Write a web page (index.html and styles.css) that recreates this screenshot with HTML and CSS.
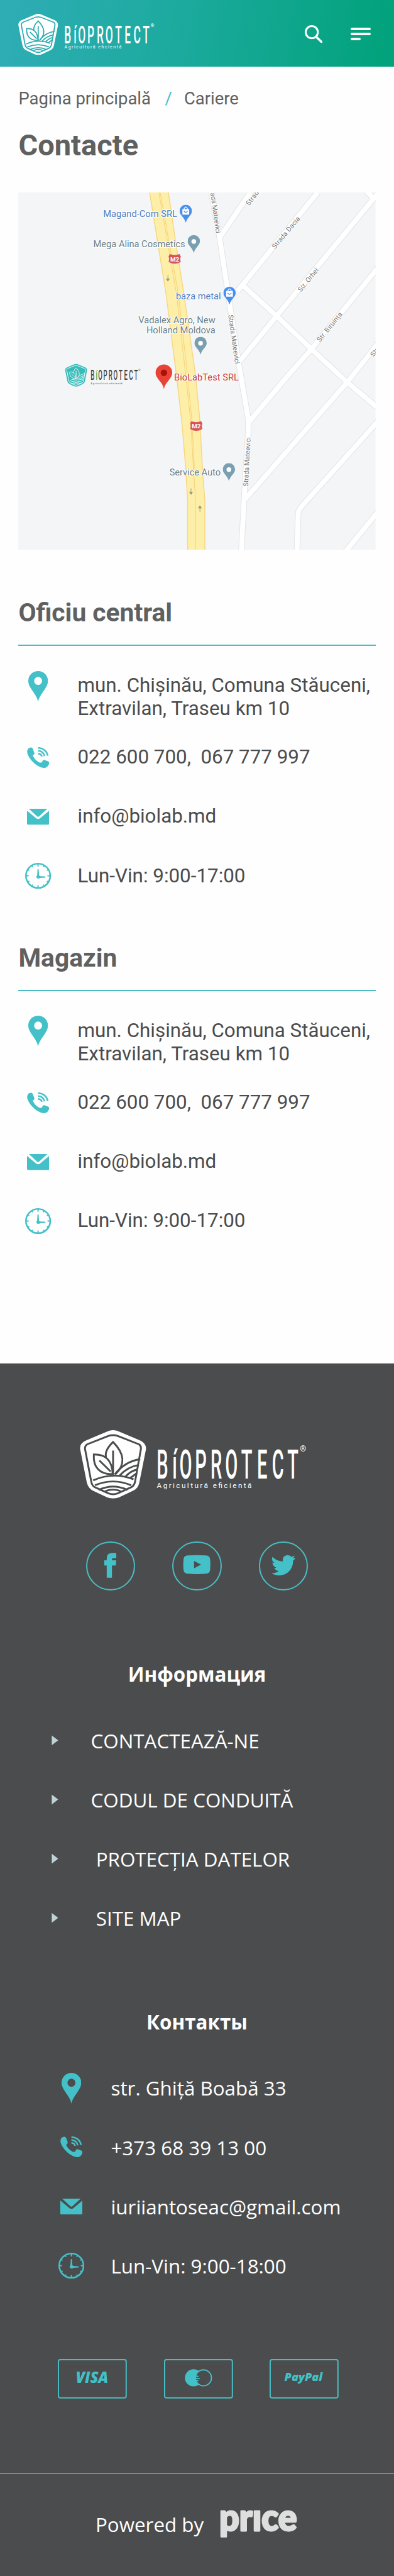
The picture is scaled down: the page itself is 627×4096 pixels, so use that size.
FILE: index.html
```html
<!DOCTYPE html>
<html lang="ro">
<head>
<meta charset="utf-8">
<title>Contacte – Bioprotect</title>
<link rel="stylesheet" href="styles.css">
</head>
<body>
<svg class="sprite" aria-hidden="true">
  <defs>
    <mask id="shield-cut" maskUnits="userSpaceOnUse" x="20" y="20" width="345" height="350">
      <path fill="#fff" d="M165 34Q192 22 219 34L328 80Q354 94 353 120L320 285Q314 312 292 323L222 356Q192 368 162 356L92 323Q72 312 64 285L31 120Q28 94 56 80Z"/>
      <g fill="none" stroke="#000" stroke-width="9">
        <path d="M170 56Q192 49 214 56L318 97Q330 104 328 120L299 282Q294 300 280 307L214 337Q192 345 170 337L104 307Q90 300 86 282L55 120Q54 104 66 97Z"/>
        <path d="M158 160C152 140 165 112 192 86C250 145 252 195 205 242M192 128V245"/>
        <path d="M98 147C152 145 188 172 190 243C125 245 94 208 98 147ZM125 176L180 230"/>
        <path d="M95 273Q192 230 292 268M104 297Q192 260 280 297M122 320Q192 287 262 320M155 325Q192 312 228 325"/>
        <path d="M200 245Q250 180 325 170M224 250Q262 207 318 198M252 256Q278 226 312 220M275 262L306 240"/>
      </g>
    </mask>
    <symbol id="shield" viewBox="30 28 324 334"><rect x="20" y="20" width="345" height="350" fill="currentColor" mask="url(#shield-cut)"/></symbol>
    <symbol id="pin" viewBox="0 0 32 50"><path fill="currentColor" fill-rule="evenodd" d="M16 0A16 16 0 0 1 32 16C32 28 18 37 16 50C14 37 0 28 0 16A16 16 0 0 1 16 0ZM16 9.500A6.500 6.500 0 1 0 16 22.500A6.500 6.500 0 1 0 16 9.500Z"/></symbol>
    <symbol id="phone" viewBox="0 0 108 103"><path fill="currentColor" d="M10 4Q24-2 28 8L36 29Q36 34 32 37L28 42Q38 64 60 76L72 76L77 66Q80 61 86 63L104 70Q110 73 107 84Q98 104 80 102Q50 98 20 64Q-4 34 1 16Q3 8 10 4Z"/><path fill="none" stroke="currentColor" stroke-width="8" d="M54 4A47 43 0 0 1 101 42M54 18A32 29 0 0 1 85 44M54 32A18 16 0 0 1 72 46"/></symbol>
    <symbol id="mail" viewBox="0 0 36 26"><path fill="currentColor" d="M3 0H33L20 12Q18 14 16 12ZM0 3L15 15.500Q18 17.500 21 15.500L36 3V24Q36 26 34 26H2Q0 26 0 24Z"/></symbol>
    <symbol id="clock" viewBox="0 0 42 42"><circle cx="21" cy="21" r="19.700" fill="none" stroke="currentColor" stroke-width="2.600"/><path fill="none" stroke="currentColor" stroke-width="2" stroke-linecap="round" d="M21 2V5M21 37V40M2 21H5M37 21H40M11 4.500L12 6M31 4.500L30 6M11 37.500L12 36M31 37.500L30 36M4.500 11L6 12M37.500 11L36 12M4.500 31L6 30M37.500 31L36 30"/><path fill="currentColor" d="M20 11Q21 9 22 11L22.600 20.500Q24 21 24.500 21.600L32.500 22Q34 23 32.500 24L24 24.400Q21 27 18.500 24Q17.500 21.500 19.500 20.500Z"/></symbol>
    <symbol id="place" viewBox="0 0 20 29"><path fill="currentColor" d="M10 0A10 10 0 0 1 20 10C20 17 13 19 10 29C7 19 0 17 0 10A10 10 0 0 1 10 0Z"/></symbol>
  </defs>
</svg>

<header class="header">
  <svg class="header-logo" viewBox="0 0 368 111">
    <use href="#shield" width="108" height="111"/>
    <text class="wordmark" transform="scale(.45 1)" y="79" x="297.8 342.2 382.2 436.7 492.2 546.7 602.2 657.8 714.4 768.9">BíOPROTECT</text>
    <text class="slogan" x="125" y="94" textLength="154">Agricultură eficientă</text>
    <text class="reg" x="362.500" y="35">®</text>
  </svg>
  <div class="header-tools">
    <svg class="icon-search" viewBox="0 0 28 28"><circle cx="11" cy="11" r="9.500" fill="none" stroke="#fff" stroke-width="3"/><path d="M18 18.500L26.500 26.500" stroke="#fff" stroke-width="3.600" stroke-linecap="round"/></svg>
    <span class="burger"><i></i><i></i><i></i></span>
  </div>
</header>

<main class="main">
  <nav class="crumbs"><span>Pagina principală</span><span class="slash">/</span><span>Cariere</span></nav>
  <h1>Contacte</h1>

  <svg class="map" viewBox="0 0 580 580">
    <defs>
      <g id="roads">
        <path d="M327 73L377 0"/>
        <path d="M356 160L364 150L486 0"/>
        <path d="M364 150L419 200L476 254L534 308L582 348"/>
        <path d="M360 273L419 201L577 10L564-4M577 10L584 2"/>
        <path d="M374 373L437 298L476 254L584 122"/>
        <path d="M368 498L534 308L584 245"/>
        <path d="M452.500 584L454.500 521Q454 516 462 507L584 371"/>
        <path d="M530 584L584 518"/>
        <path d="M313-4L327 74L339 153L358 278L373 365Q374 375 373 395L368 475L362 584"/>
      </g>
    </defs>
    <rect width="580" height="580" fill="#f4f5f7"/>
    <use href="#roads" class="road-edge"/>
    <use href="#roads" class="road-fill"/>
    <path fill="#fdefa8" stroke="#f8d684" stroke-width="1.500" d="M213-2L240 165L257 298L265.500 371L272 448L275 501V582H303V501L299 448L295 371L288 298L269 165L257 90L243.500-2Z"/>
    <path fill="none" stroke="#f6d07b" d="M228-2L257 165L272 298L280 371L284.500 448L288 501V582M230-2L260 165L275 298L282 371L286 448"/>
    <g class="street">
      <text transform="translate(312 1) rotate(82)" textLength="66">ada Mateevici</text>
      <text transform="translate(341 199) rotate(82)" textLength="80">Strada Mateevici</text>
      <text transform="translate(373 477) rotate(-87)" textLength="80">Strada Mateevici</text>
      <text transform="translate(375 22) rotate(-53)" textLength="33">Strada</text>
      <text transform="translate(417 92) rotate(-50)" textLength="64">Strada Dacia</text>
      <text transform="translate(459 162) rotate(-51)" textLength="46">Str. Orhei</text>
      <text transform="translate(490 243) rotate(-51)" textLength="58">Str. Biruința</text>
      <text transform="translate(577 267) rotate(-52)">Str.</text>
    </g>
    <g class="arrow"><path d="M243 134V141M240.500 140H245.500L243 144Z"/><path d="M280.500 480V488M278 486H283L280.500 490Z"/><path d="M295 518V510M292.500 512H297.500L295 508Z"/></g>
    <g class="badge">
      <path d="M246 100Q254 103 262 100L264 104Q262 108 264 112Q261 115.500 254 115.500Q247 115.500 244 112Q246 108 244 104Z"/>
      <path d="M281 371Q289 374 297 371L299 375Q297 379 299 383Q296 386.500 289 386.500Q282 386.500 279 383Q281 379 279 375Z"/>
      <text x="254" y="112">M2</text><text x="289" y="383">M2</text>
    </g>
    <g class="shop">
      <use href="#place" x="262" y="20" width="20" height="29"/>
      <use href="#place" x="333" y="153" width="20" height="29"/>
      <path fill="#fff" d="M266.500 27H277.500V36H266.500ZM337.500 160H348.500V169H337.500Z"/>
      <path fill="none" stroke="#fff" stroke-width="1.300" d="M269 27Q272 20 275 27M340 160Q343 153 346 160"/>
      <path fill="none" stroke="#4a8ff0" stroke-width="1.300" d="M269 30Q272 35 275 30M340 163Q343 168 346 163"/>
      <text x="138" y="40" textLength="120">Magand-Com SRL</text>
      <text x="256" y="173" textLength="73">baza metal</text>
    </g>
    <g class="poi">
      <use href="#place" x="275" y="69" width="20" height="29"/>
      <use href="#place" x="286" y="234" width="20" height="29"/>
      <use href="#place" x="332" y="439" width="20" height="29"/>
      <g fill="#fff"><circle cx="285" cy="79.500" r="3.800"/><circle cx="296" cy="244.500" r="3.800"/><circle cx="342" cy="449.500" r="3.800"/></g>
      <text x="122" y="89" textLength="149">Mega Alina Cosmetics</text>
      <text x="195" y="212" textLength="125">Vadalex Agro, New</text>
      <text x="208" y="229" textLength="112">Holland Moldova</text>
      <text x="245.500" y="459" textLength="83">Service Auto</text>
    </g>
    <g class="target">
      <path d="M236.500 279A13.500 13.500 0 0 1 250 292.500C250 302 238 308 236.500 319C235 308 223 302 223 292.500A13.500 13.500 0 0 1 236.500 279Z" fill="#ea4335"/>
      <circle cx="236.500" cy="292.500" r="5.300" fill="#a5140c"/>
      <text x="253" y="305" textLength="105">BioLabTest SRL</text>
    </g>
    <g transform="translate(76 278) scale(.3333)">
      <g class="map-shield"><use href="#shield" width="108" height="111"/></g>
      <text class="wordmark wordmark-dark" transform="scale(.45 1)" y="79" x="297.8 342.2 382.2 436.7 492.2 546.7 602.2 657.8 714.4 768.9">B<tspan fill="#1fa84c">í</tspan>OPROTECT</text>
      <text class="slogan slogan-dark" x="125" y="98" textLength="154">Agricultură eficientă</text>
      <text class="reg reg-dark" x="362.500" y="35">®</text>
    </g>
  </svg>

  <section class="office">
    <h2>Oficiu central</h2>
    <ul class="contacts">
      <li class="address"><span class="ico"><svg class="i-pin"><use href="#pin"/></svg></span><span>mun. Chișinău, Comuna Stăuceni,<br>Extravilan, Traseu km 10</span></li>
      <li><span class="ico"><svg class="i-phone"><use href="#phone"/></svg></span><span>022 600 700,&nbsp; 067 777 997</span></li>
      <li><span class="ico"><svg class="i-mail"><use href="#mail"/></svg></span><span>info@biolab.md</span></li>
      <li><span class="ico"><svg class="i-clock"><use href="#clock"/></svg></span><span>Lun-Vin: 9:00-17:00</span></li>
    </ul>
  </section>
  <section class="office">
    <h2>Magazin</h2>
    <ul class="contacts">
      <li class="address"><span class="ico"><svg class="i-pin"><use href="#pin"/></svg></span><span>mun. Chișinău, Comuna Stăuceni,<br>Extravilan, Traseu km 10</span></li>
      <li><span class="ico"><svg class="i-phone"><use href="#phone"/></svg></span><span>022 600 700,&nbsp; 067 777 997</span></li>
      <li><span class="ico"><svg class="i-mail"><use href="#mail"/></svg></span><span>info@biolab.md</span></li>
      <li><span class="ico"><svg class="i-clock"><use href="#clock"/></svg></span><span>Lun-Vin: 9:00-17:00</span></li>
    </ul>
  </section>
</main>

<footer class="footer">
  <svg class="footer-logo" viewBox="0 0 368 111">
    <use href="#shield" width="108" height="111"/>
    <text class="wordmark" transform="scale(.45 1)" y="79" x="297.8 342.2 382.2 436.7 492.2 546.7 602.2 657.8 714.4 768.9">BíOPROTECT</text>
    <text class="slogan" x="125" y="94" textLength="154">Agricultură eficientă</text>
    <text class="reg" x="362.500" y="35">®</text>
  </svg>
  <div class="socials">
    <a><svg viewBox="0 0 80 80"><path d="M33.500 59V39H29.500V30.500H33.500V27Q33.500 19 42 18.500H49V27H44.500Q41.800 27 41.800 30V30.500H49L48.200 39H42V59Z"/></svg></a>
    <a><svg viewBox="0 0 80 80"><path fill-rule="evenodd" d="M25 22.700Q40 21.500 55 22.700Q61 23 61.600 29Q62.500 37.500 61.600 46Q61 52 55 52.400Q40 53.500 25 52.400Q19 52 18.400 46Q17.500 37.500 18.400 29Q19 23 25 22.700ZM35.500 31.500V43.500L46.800 37.500Z"/></svg></a>
    <a><svg viewBox="0 0 80 80"><path d="M22 25Q29 32 39 32.500Q37.500 23 46.500 22.300Q50.500 22.300 53 25L58 23Q57 26 55 27.500L59.500 26.500Q58 29.500 55.500 31C55.500 46 45 55 32.500 55Q25.500 55 20.500 51.500Q27.500 52 32 48Q27 47.500 25 42.700Q27 43 28.500 42.500Q22 40.500 22 34Q24 35 25.500 35Q19.500 31 22 25Z"/></svg></a>
  </div>
  <h3 class="info-title">Информация</h3>
  <ul class="links">
    <li>CONTACTEAZĂ-NE</li>
    <li>CODUL DE CONDUITĂ</li>
    <li>&nbsp;PROTECȚIA DATELOR</li>
    <li>&nbsp;SITE MAP</li>
  </ul>
  <h3 class="contact-title">Контакты</h3>
  <ul class="contacts footer-contacts">
    <li><span class="ico"><svg class="i-pin"><use href="#pin"/></svg></span><span>str. Ghiță Boabă 33</span></li>
    <li><span class="ico"><svg class="i-phone"><use href="#phone"/></svg></span><span>+373 68 39 13 00</span></li>
    <li><span class="ico"><svg class="i-mail"><use href="#mail"/></svg></span><span>iuriiantoseac@gmail.com</span></li>
    <li><span class="ico"><svg class="i-clock"><use href="#clock"/></svg></span><span>Lun-Vin: 9:00-18:00</span></li>
  </ul>
  <div class="cards">
    <svg viewBox="0 0 112 64"><rect x="1" y="1" width="110" height="62" rx="3"/><text class="visa" x="29" y="39" textLength="53" lengthAdjust="spacingAndGlyphs">VISA</text></svg>
    <svg viewBox="0 0 112 64"><rect x="1" y="1" width="110" height="62" rx="3"/><circle class="solid" cx="48" cy="30.500" r="14"/><circle class="ring" cx="64" cy="30.500" r="13"/><path class="bars" d="M50 28H56M49 31.500H58M51 35H56"/></svg>
    <svg viewBox="0 0 112 64"><rect x="1" y="1" width="110" height="62" rx="3"/><text class="paypal" x="24" y="36" textLength="62" lengthAdjust="spacingAndGlyphs">PayPal</text></svg>
  </div>
  <div class="powered">
    <span>Powered by</span>
    <svg class="price" viewBox="0 0 126 44"><text x="0" y="32.500" textLength="126" lengthAdjust="spacingAndGlyphs">prıce</text></svg>
  </div>
</footer>
</body>
</html>
```
FILE: styles.css
```css
html { font-size: 9.803px; }
* { box-sizing: border-box; }
body {
  margin: 0;
  min-height: 4096px;
  display: flex;
  flex-direction: column;
  font-family: Roboto, "Liberation Sans", sans-serif;
  background: #fefefe;
  overflow-x: hidden;
}
h1, h2, h3, ul { margin: 0; padding: 0; list-style: none; }
svg { display: block; flex: none; }
.sprite { position: absolute; width: 0; height: 0; }

.header {
  height: 10.8rem;
  padding: 0 3.8rem 0 3rem;
  display: flex;
  align-items: center;
  justify-content: space-between;
  background: linear-gradient(100deg, #2fadb6 0%, #1caa9e 45%, #02a27c 97%);
  color: #fff;
}
.header-logo { width: 22.1rem; height: 6.67rem; margin-top: .4rem; }
.header-tools { display: flex; align-items: center; gap: 4.6rem; margin-top: .2rem; }
.icon-search { width: 2.9rem; height: 2.9rem; }
.burger { display: flex; flex-direction: column; gap: .4rem; width: 3.2rem; }
.burger i { height: .4rem; border-radius: .2rem; background: #fff; }
.burger i:last-child { width: 1.6rem; }

.wordmark { font: 500 66px Roboto, sans-serif; fill: #fff; text-anchor: middle; }
.slogan { font: 400 12px Roboto, sans-serif; fill: #fff; }
.reg { font: 400 13px Roboto, sans-serif; fill: #fff; text-anchor: middle; }
.wordmark-dark, .slogan-dark, .reg-dark { fill: #444; }

.main { padding: 3.7rem 3rem 18.3rem; }
.crumbs { display: flex; font-size: 2.8rem; line-height: 3.2rem; color: #606161; }
.slash { margin: 0 1.95rem 0 2.3rem; color: #45bfc6; }
h1 { margin: 3.1rem 0 4.8rem; font-size: 4.8rem; line-height: 5.6rem; font-weight: 700; color: #5f6060; }
.map { width: 58rem; height: 58rem; font-family: Roboto, sans-serif; }
.road-edge { fill: none; stroke: #e1e3e5; stroke-width: 10px; }
.road-fill { fill: none; stroke: #fff; stroke-width: 8px; }
.street { font-size: 11px; fill: #777; stroke: #fff; stroke-width: 2px; paint-order: stroke; }
.arrow path { fill: #a39a72; stroke: #a39a72; stroke-width: 1px; }
.badge path { fill: #d8545a; }
.badge text { fill: #fff; font-size: 10px; font-weight: 700; text-anchor: middle; }
.shop { color: #4a8ff0; }
.poi { color: #7a9fb1; }
.shop text, .poi text, .target text { font-size: 15px; stroke: #fff; stroke-width: 2px; paint-order: stroke; }
.shop text { fill: #4b7dc3; }
.poi text { fill: #6c8088; }
.target text { fill: #c5403c; }
.map-shield { color: #36bdb9; }

.office { margin-top: 7.8rem; }
.office + .office { margin-top: 6.1rem; }
h2 {
  font-size: 4.16rem;
  line-height: 4.8rem;
  padding-bottom: 2.8rem;
  border-bottom: 2px solid #4abdc4;
  font-weight: 700;
  color: #5f6060;
}
.contacts li { display: flex; align-items: center; height: 9.6rem; font-size: 3.2rem; line-height: 3.75rem; color: #4b4c4d; white-space: nowrap; }
.contacts .address { height: 13.3rem; align-items: flex-start; padding-top: 4.6rem; }
.address .ico { margin-top: -.6rem; }
.ico { width: 6.4rem; margin-right: 3.2rem; display: flex; justify-content: center; color: #44c1c8; }
.i-pin { width: 3.2rem; height: 5rem; }
.i-phone { width: 3.6rem; height: 3.4rem; }
.i-mail { width: 3.6rem; height: 2.6rem; }
.i-clock { width: 4.2rem; height: 4.2rem; }

.footer { flex: 1; background: #4b4c4d; color: #fff; padding-top: 10.8rem; font-family: "Open Sans", sans-serif; }
.footer-logo { width: 36.8rem; height: 11.1rem; margin-left: 13rem; }
.socials { display: flex; justify-content: center; gap: 6rem; margin-top: 6.9rem; }
.socials a { width: 8rem; height: 8rem; border: 2px solid #4abdc4; border-radius: 50%; display: flex; align-items: center; justify-content: center; }
.socials svg { width: 8rem; height: 8rem; fill: #44c1c8; }
h3 { font-size: 3.2rem; line-height: 4.4rem; font-weight: 700; text-align: center; }
.info-title { margin: 11.3rem 0 3.8rem; }
.contact-title { margin: 9.8rem 0 3.8rem; }
.links { padding-left: 8.4rem; }
.links li { display: flex; align-items: center; height: 9.6rem; font-size: 3.2rem; line-height: 4.4rem; }
.links li::before {
  content: "";
  width: 1.05rem;
  height: 1.6rem;
  margin-right: 5.3rem;
  background: #bfd2d6;
  clip-path: polygon(0 0, 100% 50%, 0 100%);
}
.footer-contacts { padding-left: 8.4rem; }
.footer-contacts li { color: #fff; line-height: 4.4rem; }
.cards { display: flex; gap: 6rem; margin: 10.4rem 0 12rem; padding-left: 9.4rem; }
.cards svg { width: 11.2rem; height: 6.4rem; }
.cards rect { fill: none; stroke: #4abdc4; stroke-width: 2px; }
.cards text { fill: #44c1c8; font-family: "Open Sans", sans-serif; font-style: italic; font-weight: 800; }
.visa { font-size: 25px; }
.paypal { font-size: 18px; }
.solid { fill: #44c1c8; }
.ring { fill: #4b4c4d; stroke: #4abdc4; stroke-width: 2px; }
.bars { stroke: #44c1c8; stroke-width: 2px; }
.powered {
  height: 16.5rem;
  border-top: 2px solid #858687;
  padding-left: 15.5rem;
  display: flex;
  align-items: center;
  gap: 2.5rem;
  font-size: 3.2rem;
  line-height: 4.4rem;
}
.price { width: 12.6rem; height: 4.4rem; overflow: visible; }
.price text { font: 900 60px Lato, sans-serif; fill: #dedede; stroke: #dedede; stroke-width: 3px; stroke-linejoin: round; }
```
